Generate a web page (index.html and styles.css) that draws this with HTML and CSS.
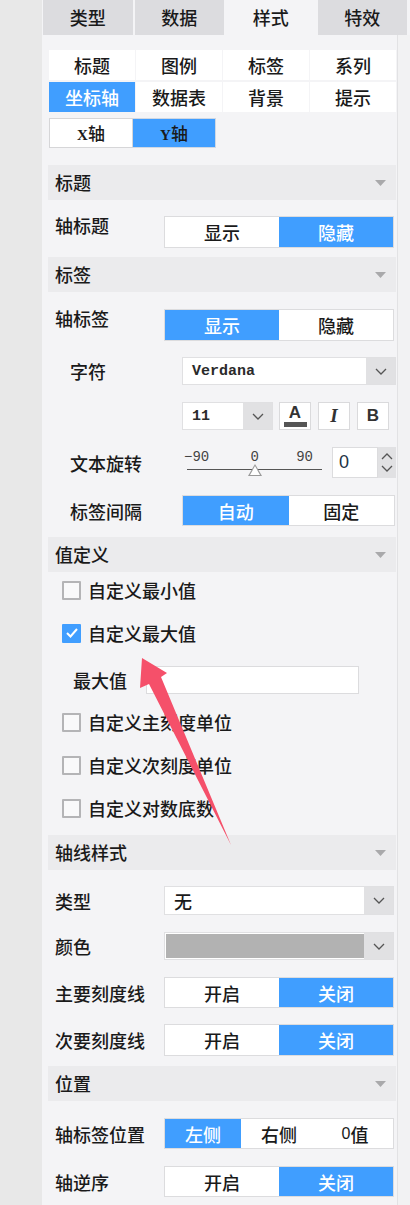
FILE: index.html
```html
<!DOCTYPE html>
<html lang="zh-CN">
<head>
<meta charset="utf-8">
<title>样式面板</title>
<link rel="stylesheet" href="styles.css">
</head>
<body>
<div class="app">
  <div class="side"></div>
  <div class="main">
    <div class="tabs">
      <div class="tab">类型</div>
      <div class="tab">数据</div>
      <div class="tab on">样式</div>
      <div class="tab">特效</div>
    </div>
    <div class="body">
      <div class="content">
        <div class="subgrid">
          <div class="sub">标题</div>
          <div class="sub">图例</div>
          <div class="sub">标签</div>
          <div class="sub">系列</div>
          <div class="sub on">坐标轴</div>
          <div class="sub">数据表</div>
          <div class="sub">背景</div>
          <div class="sub">提示</div>
        </div>
        <div class="axes">
          <div class="axis"><span class="lat">X</span>轴</div>
          <div class="axis on"><span class="lat">Y</span>轴</div>
        </div>

        <div class="head mt17">标题<svg class="caret" width="11" height="6" viewBox="0 0 11 6"><path d="M0 0H11L5.5 6Z"/></svg></div>
        <div class="row h32 mt16">
          <div class="lbl top">轴标题</div>
          <div class="toggle"><div class="seg">显示</div><div class="seg on">隐藏</div></div>
        </div>

        <div class="head mt9">标签<svg class="caret" width="11" height="6" viewBox="0 0 11 6"><path d="M0 0H11L5.5 6Z"/></svg></div>
        <div class="row h32 mt17">
          <div class="lbl top">轴标签</div>
          <div class="toggle"><div class="seg on">显示</div><div class="seg">隐藏</div></div>
        </div>
        <div class="row h28 mt16">
          <div class="lbl ind">字符</div>
          <div class="select wide">
            <div class="val mono">Verdana</div>
            <div class="drop"><svg width="12" height="7" viewBox="0 0 12 7"><polyline points="1,1 6,6 11,1"/></svg></div>
          </div>
        </div>
        <div class="row h28 mt17">
          <div class="lbl ind"></div>
          <div class="select size">
            <div class="val mono">11</div>
            <div class="drop"><svg width="12" height="7" viewBox="0 0 12 7"><polyline points="1,1 6,6 11,1"/></svg></div>
          </div>
          <div class="fbtns">
            <div class="fbtn color"><span class="a">A</span><span class="bar"></span></div>
            <div class="fbtn"><span class="i">I</span></div>
            <div class="fbtn"><span class="b">B</span></div>
          </div>
        </div>
        <div class="row h31 mt17">
          <div class="lbl ind">文本旋转</div>
          <div class="slider">
            <div class="ticks"><span>−90</span><span>0</span><span>90</span></div>
            <div class="track"><span class="thumb"></span></div>
          </div>
          <div class="num">
            <div class="numval">0</div>
            <div class="spin">
              <svg width="12" height="7" viewBox="0 0 12 7"><polyline points="1,6 6,1 11,6"/></svg>
              <svg width="12" height="7" viewBox="0 0 12 7"><polyline points="1,1 6,6 11,1"/></svg>
            </div>
          </div>
        </div>
        <div class="row h31 mt17">
          <div class="lbl ind">标签间隔</div>
          <div class="toggle short"><div class="seg on">自动</div><div class="seg">固定</div></div>
        </div>

        <div class="head mt11">值定义<svg class="caret" width="11" height="6" viewBox="0 0 11 6"><path d="M0 0H11L5.5 6Z"/></svg></div>
        <div class="check mt8"><span class="box"></span>自定义最小值</div>
        <div class="check mt23"><span class="box on"><svg width="14" height="12" viewBox="0 0 14 12"><polyline points="2,6 5.5,9.5 12,2"/></svg></span>自定义最大值</div>
        <div class="row h28 mt23 maxrow">
          <div class="lbl max">最大值</div>
          <div class="input"></div>
        </div>
        <div class="check mt18"><span class="box"></span>自定义主刻度单位</div>
        <div class="check mt23"><span class="box"></span>自定义次刻度单位</div>
        <div class="check mt23"><span class="box"></span>自定义对数底数</div>

        <div class="head mt17">轴线样式<svg class="caret" width="11" height="6" viewBox="0 0 11 6"><path d="M0 0H11L5.5 6Z"/></svg></div>
        <div class="row h29 mt16">
          <div class="lbl">类型</div>
          <div class="select full">
            <div class="val">无</div>
            <div class="drop"><svg width="12" height="7" viewBox="0 0 12 7"><polyline points="1,1 6,6 11,1"/></svg></div>
          </div>
        </div>
        <div class="row h28 mt17">
          <div class="lbl">颜色</div>
          <div class="select full">
            <div class="val swatch"></div>
            <div class="drop"><svg width="12" height="7" viewBox="0 0 12 7"><polyline points="1,1 6,6 11,1"/></svg></div>
          </div>
        </div>
        <div class="row h31 mt17">
          <div class="lbl">主要刻度线</div>
          <div class="toggle"><div class="seg">开启</div><div class="seg on">关闭</div></div>
        </div>
        <div class="row h32 mt16">
          <div class="lbl">次要刻度线</div>
          <div class="toggle"><div class="seg">开启</div><div class="seg on">关闭</div></div>
        </div>

        <div class="head mt10">位置<svg class="caret" width="11" height="6" viewBox="0 0 11 6"><path d="M0 0H11L5.5 6Z"/></svg></div>
        <div class="row h31 mt17">
          <div class="lbl">轴标签位置</div>
          <div class="toggle"><div class="seg on">左侧</div><div class="seg">右侧</div><div class="seg"><span class="zero">0</span>值</div></div>
        </div>
        <div class="row h31 mt17">
          <div class="lbl">轴逆序</div>
          <div class="toggle"><div class="seg">开启</div><div class="seg on">关闭</div></div>
        </div>
      </div>
      <div class="strip"></div>
    </div>
  </div>
  <svg class="arrow" width="410" height="1205" viewBox="0 0 410 1205">
    <polygon points="142,658 167,673 161,677 231,845 149,684 140,688"/>
  </svg>
</div>
</body>
</html>
```

FILE: styles.css
```css
* { box-sizing: border-box; }
html, body { margin: 0; padding: 0; }
body {
  font-family: "Noto Sans CJK SC", "Noto Sans", sans-serif;
  font-size: 18px;
  font-weight: 500;
  color: #1a1a1a;
  background: #e8e8e8;
}
.app {
  position: relative;
  display: flex;
  width: 410px;
  height: 1205px;
  overflow: hidden;
}
.side {
  width: 42px;
  flex: none;
  background: #e8e8e8;
}
.main {
  flex: 1;
  display: flex;
  flex-direction: column;
  background: #f4f4f6;
}
.tabs {
  display: grid;
  grid-template-columns: repeat(4, 1fr);
  column-gap: 2px;
  width: 364px;
  height: 35px;
  margin-left: 1px;
  flex: none;
}
.tab {
  background: #dcdcdf;
  text-align: center;
  line-height: 35px;
}
.tab.on { background: #f4f4f6; }
.body {
  flex: 1;
  display: flex;
}
.content {
  width: 355px;
  flex: none;
  padding: 15px 1px 0 6px;
}
.strip {
  flex: 1;
  border-left: 1px solid #e2e2e4;
  background: #f2f2f3;
}
.subgrid {
  display: grid;
  grid-template-columns: repeat(4, 1fr);
  gap: 2px 1px;
  margin-left: 1px;
}
.sub {
  height: 30px;
  line-height: 30px;
  background: #fff;
  text-align: center;
}
.sub.on { background: #409eff; color: #fff; }
.axes {
  display: flex;
  margin-top: 6px;
  margin-left: 1px;
}
.axis {
  width: 84px;
  height: 30px;
  line-height: 28px;
  border: 1px solid #d6d6d8;
  background: #fff;
  text-align: center;
  font-size: 17px;
}
.axis + .axis { width: 83px; border-left: none; }
.axis.on { background: #409eff; border-color: #cfd8e4; }
.lat {
  font-family: "Liberation Serif", serif;
  font-weight: bold;
  font-size: 15px;
}
.head {
  height: 35px;
  background: #ebebed;
  padding: 0 10px 0 7px;
  line-height: 35px;
  display: flex;
  align-items: center;
  justify-content: space-between;
}
.caret { fill: #a9a9ab; }
.mt8 { margin-top: 8px; }
.mt9 { margin-top: 9px; }
.mt10 { margin-top: 10px; }
.mt11 { margin-top: 11px; }
.mt16 { margin-top: 16px; }
.mt17 { margin-top: 17px; }
.mt18 { margin-top: 18px; }
.mt23 { margin-top: 23px; }
.h28 { height: 28px; }
.h29 { height: 29px; }
.h31 { height: 31px; }
.h32 { height: 32px; }
.row {
  display: flex;
  align-items: center;
}
.lbl {
  width: 116px;
  flex: none;
  padding-left: 7px;
  line-height: 24px;
  white-space: nowrap;
}
.lbl.top { align-self: flex-start; margin-top: -3px; }
.lbl.ind { width: 134px; padding-left: 22px; }
.toggle {
  display: flex;
  width: 230px;
  height: 100%;
  border: 1px solid #dcdcde;
  background: #fff;
}
.toggle.short { width: 213px; }
.seg {
  flex: 1;
  display: flex;
  align-items: center;
  justify-content: center;
}
.seg.on { background: #409eff; color: #fff; }
.zero {
  font-family: "Liberation Sans", sans-serif;
  font-size: 16px;
}
.select {
  display: flex;
  height: 100%;
  border: 1px solid #e0e0e2;
  background: #fff;
}
.select.wide { width: 214px; }
.select.full { width: 230px; }
.select.size { width: 91px; }
.val {
  flex: 1;
  display: flex;
  align-items: center;
  padding-left: 9px;
}
.mono {
  font-family: "Liberation Mono", monospace;
  font-size: 15px;
  font-weight: bold;
  color: #2a2a2a;
}
.val.swatch { background: #b2b2b2; margin: 1px 0 1px 1px; }
.drop {
  width: 29px;
  flex: none;
  background: #e1e1e3;
  display: flex;
  align-items: center;
  justify-content: center;
}
.drop svg, .spin svg {
  fill: none;
  stroke: #555;
  stroke-width: 1.3;
}
.fbtns {
  display: flex;
  gap: 7px;
  margin-left: 6px;
  height: 100%;
}
.fbtn {
  width: 32px;
  height: 100%;
  border: 1px solid #dadadc;
  background: #fff;
  display: flex;
  flex-direction: column;
  align-items: center;
  justify-content: center;
  color: #333;
}
.fbtn .a {
  font-family: "Liberation Sans", sans-serif;
  font-weight: bold;
  font-size: 17px;
  line-height: 15px;
}
.fbtn .bar {
  width: 23px;
  height: 5px;
  background: #555;
  margin-top: 2px;
}
.fbtn .i {
  font-family: "Liberation Serif", serif;
  font-style: italic;
  font-weight: bold;
  font-size: 19px;
}
.fbtn .b {
  font-family: "Liberation Sans", sans-serif;
  font-weight: bold;
  font-size: 17px;
}
.slider {
  width: 140px;
  height: 100%;
  display: flex;
  flex-direction: column;
}
.ticks {
  display: flex;
  justify-content: space-between;
  padding: 0 9px 0 2px;
  margin-top: 2px;
  height: 16px;
  font-family: "Liberation Mono", monospace;
  font-size: 14px;
  line-height: 16px;
  color: #444;
}
.ticks span:nth-child(2) { margin-left: 4px; }
.track {
  position: relative;
  height: 1px;
  margin: 4px 0 0 5px;
  background: #555;
}
.thumb {
  position: absolute;
  left: 61px;
  top: -5px;
  width: 0;
  height: 0;
  border-left: 7px solid transparent;
  border-right: 7px solid transparent;
  border-bottom: 12px solid #999;
}
.thumb::after {
  content: "";
  position: absolute;
  left: -5px;
  top: 2px;
  border-left: 5px solid transparent;
  border-right: 5px solid transparent;
  border-bottom: 9px solid #fff;
}
.num {
  display: flex;
  height: 100%;
  margin-left: 10px;
}
.numval {
  width: 46px;
  border: 1px solid #dcdcde;
  background: #fff;
  padding-left: 6px;
  display: flex;
  align-items: center;
  font-family: "Liberation Sans", sans-serif;
  font-size: 18px;
  color: #234;
}
.spin {
  width: 18px;
  background: #e1e1e3;
  display: flex;
  flex-direction: column;
  align-items: center;
  justify-content: space-around;
  padding: 3px 0;
}
.check {
  display: flex;
  align-items: center;
  height: 20px;
  padding-left: 14px;
  gap: 7px;
}
.box {
  width: 19px;
  height: 19px;
  border: 2px solid #b4b4b6;
  border-radius: 1px;
  background: #f9f9fa;
  display: flex;
  align-items: center;
  justify-content: center;
}
.box.on {
  background: #409eff;
  border-color: #409eff;
}
.box svg {
  fill: none;
  stroke: #fff;
  stroke-width: 2;
}
.maxrow .lbl.max { width: 98px; padding-left: 25px; }
.input {
  width: 213px;
  height: 100%;
  border: 1px solid #dcdcde;
  background: #fff;
}
.arrow {
  position: absolute;
  left: 0;
  top: 0;
  pointer-events: none;
  fill: #f5506a;
}
```
